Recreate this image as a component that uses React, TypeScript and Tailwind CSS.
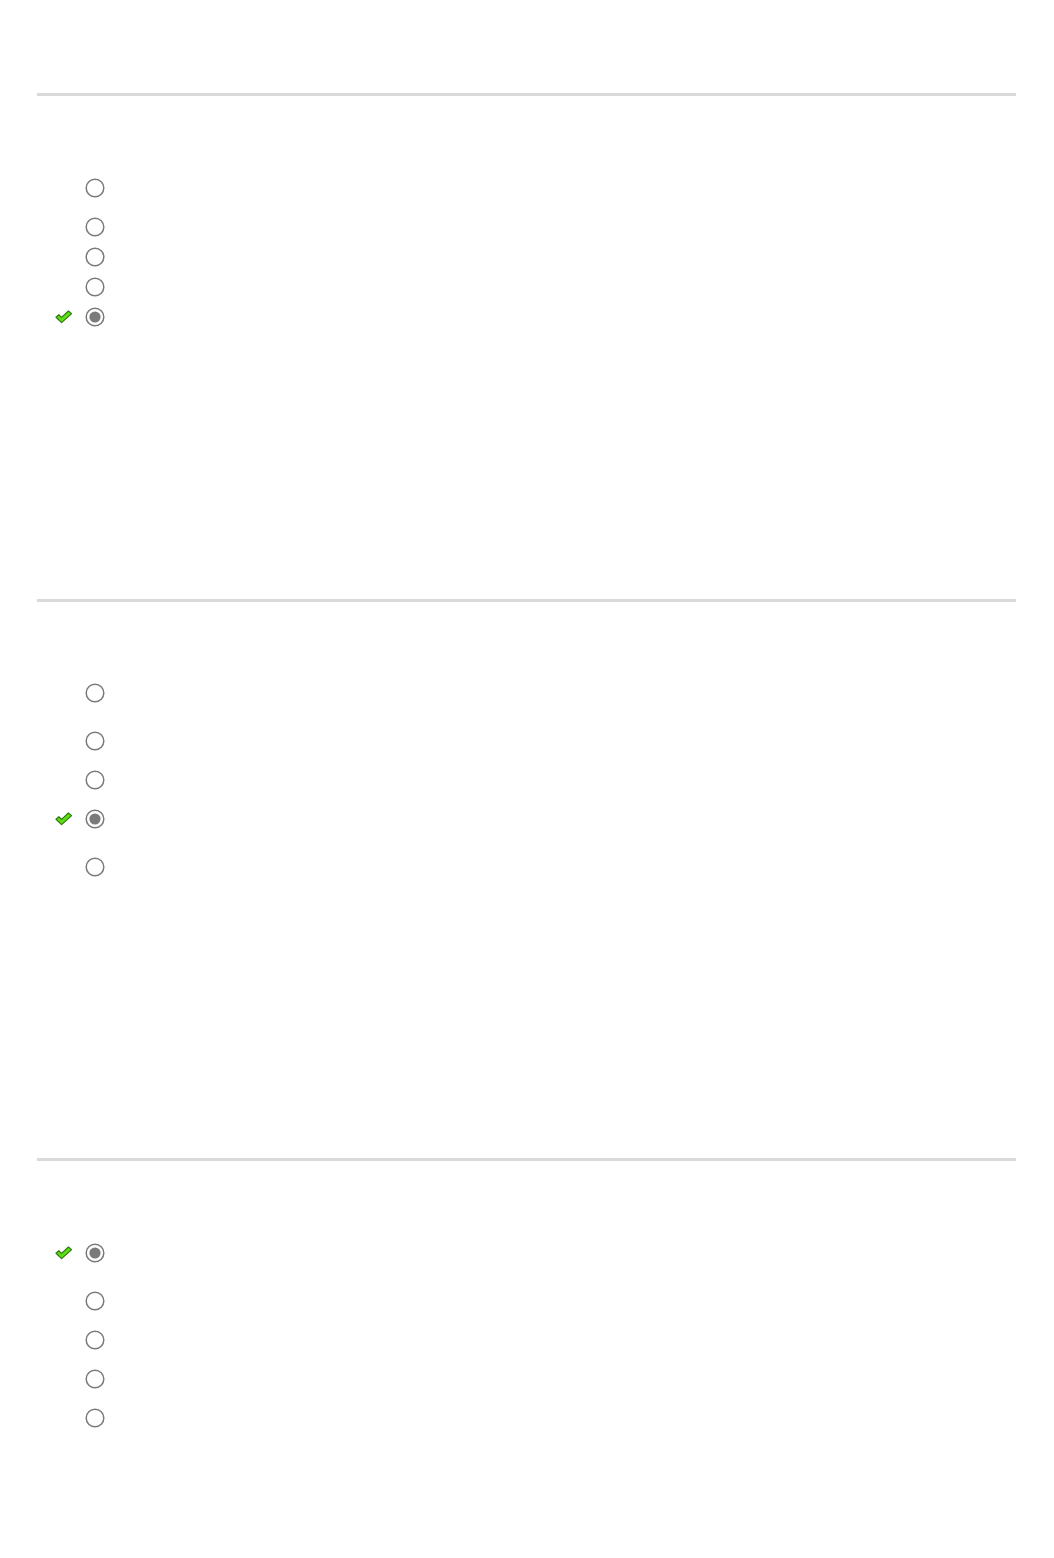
type Question = {
  rows: number[]; // row heights in px
  correct: number; // index of checked answer
  before: string; // question text area
  after: string; // spacer class after last row
};

const questions: Question[] = [
  { rows: [39, 30, 30, 30, 30], correct: 4, before: 'h-[77px]', after: 'h-[267px]' },
  { rows: [48, 39, 39, 48, 30], correct: 3, before: 'h-[76px]', after: 'h-[276px]' },
  { rows: [48, 39, 39, 39, 30], correct: 0, before: 'h-[77px]', after: 'h-[120px]' },
];

const rowHeight: Record<number, string> = {
  30: 'h-[30px]',
  39: 'h-[39px]',
  48: 'h-[48px]',
};

function CheckMark() {
  return (
    <svg width="18" height="14" viewBox="0 0 18 14">
      <path
        d="M1 7.2 L3.8 4.8 L6.6 7.4 L13.4 1 L16.6 3.6 L6.6 12.6 Z"
        fill="#5fdd15"
        stroke="#2e7a0a"
        strokeWidth="1.2"
        strokeLinejoin="round"
      />
    </svg>
  );
}

function Radio({ checked }: { checked: boolean }) {
  return (
    <svg width="20" height="20" viewBox="0 0 20 20">
      <circle cx="10" cy="10" r="8.8" fill="white" stroke="#7a7a7a" strokeWidth="1.5" />
      {checked && <circle cx="10" cy="10" r="5.6" fill="#7a7a7a" />}
    </svg>
  );
}

function QuestionBlock({ q }: { q: Question }) {
  return (
    <div className="border-t-[3px] border-[#dadada]">
      {/* question text area */}
      <div className={q.before} />
      <div className="flex flex-col">
        {q.rows.map((h, i) => (
          <div key={i} className={`flex items-start ${rowHeight[h]}`}>
            <div className="w-[48px] h-[30px] flex items-center justify-end pr-[12px]">
              {i === q.correct && <CheckMark />}
            </div>
            <div className="h-[30px] flex items-center">
              <Radio checked={i === q.correct} />
            </div>
            <span className="ml-3 text-sm text-white" style={{ fontFamily: '"Liberation Sans", sans-serif' }} />
          </div>
        ))}
      </div>
      <div className={q.after} />
    </div>
  );
}

export default function App() {
  return (
    <div className="bg-white min-h-[1558px] pt-[93px] pl-[37px] pr-[38px]">
      {questions.map((q, i) => (
        <QuestionBlock key={i} q={q} />
      ))}
    </div>
  );
}
